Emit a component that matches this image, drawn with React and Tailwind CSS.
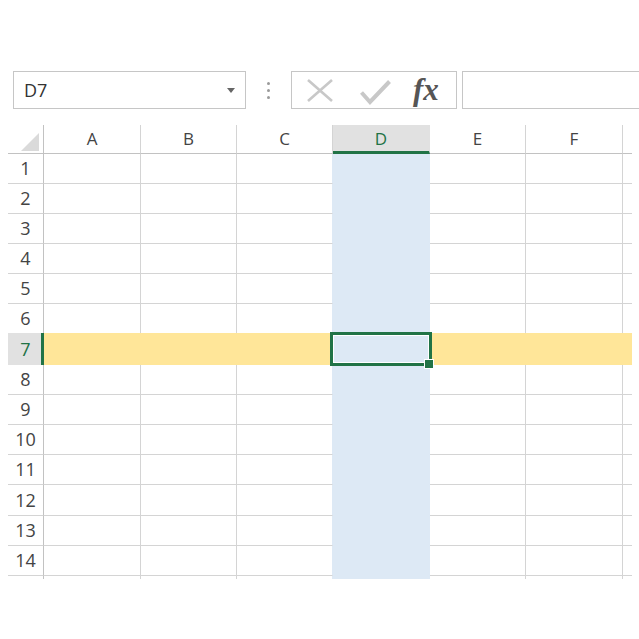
import React from "react";

const cols = [
  { l: "A", w: "w-[97px]" },
  { l: "B", w: "w-[96px]" },
  { l: "C", w: "w-[96px]" },
  { l: "D", w: "w-[97px]" },
  { l: "E", w: "w-[96px]" },
  { l: "F", w: "w-[97px]" },
];

const rowHeights = {
  1: "h-[30px]", 2: "h-[30px]", 3: "h-[30px]", 4: "h-[30px]", 5: "h-[30px]", 6: "h-[30px]",
  7: "h-[32px]", 8: "h-[30px]", 9: "h-[30px]", 10: "h-[30px]", 11: "h-[30px]", 12: "h-[31px]",
  13: "h-[30px]", 14: "h-[30px]",
};

function HeaderRow() {
  return (
    <div className="flex h-[29px]">
      <div className="w-[36px] shrink-0 border-r border-b border-[#c2c2c2] flex items-end justify-end pr-[4px] pb-[2px]">
        <svg width="18" height="18" viewBox="0 0 18 18">
          <polygon points="18,0 18,18 0,18" fill="#dadada" />
        </svg>
      </div>
      {cols.map((c) =>
        c.l === "D" ? (
          <div
            key={c.l}
            className={`${c.w} shrink-0 bg-[#e1e1e1] border-r border-r-[#e1e1e1] border-b-[3px] border-b-[#217346] flex items-center justify-center text-[#217346] text-[17px] pt-[2px]`}
          >
            {c.l}
          </div>
        ) : (
          <div
            key={c.l}
            className={`${c.w} shrink-0 border-r border-r-[#d4d4d4] border-b border-b-[#c2c2c2] flex items-center justify-center text-[#444] text-[17px]`}
          >
            {c.l}
          </div>
        )
      )}
      <div className="w-[9px] shrink-0 border-b border-[#c2c2c2]" />
    </div>
  );
}

function BodyRow({ n }) {
  const h = rowHeights[n];
  if (n === 7) {
    return (
      <div className={`flex ${h} mt-[-1px]`}>
        <div className="w-[36px] shrink-0 bg-[#e1e1e1] border-r-[3px] border-[#217346] flex items-center justify-center text-[#217346] text-[18px] pl-[2px]">
          7
        </div>
        {cols.map((c) => (
          <div
            key={c.l}
            className={`${c.w} shrink-0 ${c.l === "D" ? "bg-[#dde9f5]" : "bg-[#ffe699]"}`}
          />
        ))}
        <div className="w-[9px] shrink-0 bg-[#ffe699]" />
      </div>
    );
  }
  return (
    <div className={`flex ${h}`}>
      <div className="w-[36px] shrink-0 border-r border-r-[#c2c2c2] border-b border-b-[#d4d4d4] flex items-center justify-center text-[#444] text-[18px]">
        {n}
      </div>
      {cols.map((c) => {
        if (c.l === "D")
          return <div key={c.l} className={`${c.w} shrink-0 bg-[#dde9f5]`} />;
        if (c.l === "C")
          return (
            <div
              key={c.l}
              className={`${c.w} shrink-0 border-r border-r-[#dde9f5] border-b border-b-[#d4d4d4]`}
            />
          );
        return (
          <div key={c.l} className={`${c.w} shrink-0 border-r border-b border-[#d4d4d4]`} />
        );
      })}
      <div className="w-[9px] shrink-0 border-b border-[#d4d4d4]" />
    </div>
  );
}

function TrailerRow() {
  return (
    <div className="flex h-[3px]">
      <div className="w-[36px] shrink-0 border-r border-[#c2c2c2]" />
      {cols.map((c) => {
        if (c.l === "D") return <div key={c.l} className={`${c.w} shrink-0 bg-[#dde9f5]`} />;
        if (c.l === "C")
          return <div key={c.l} className={`${c.w} shrink-0 border-r border-[#dde9f5]`} />;
        return <div key={c.l} className={`${c.w} shrink-0 border-r border-[#d4d4d4]`} />;
      })}
    </div>
  );
}

export default function App() {
  const rows = Array.from({ length: 14 }, (_, i) => i + 1);
  return (
    <div
      className="w-[639px] h-[639px] bg-white overflow-hidden"
      style={{ fontFamily: '"Open Sans", "Noto Sans", sans-serif' }}
    >
      {/* toolbar */}
      <div className="flex items-start pt-[71px] pl-[13px]">
        <div className="w-[233px] h-[38px] shrink-0 border border-[#c6c6c6] flex items-center justify-between pl-[10px] pr-[10px]">
          <span className="text-[18px] text-[#333] leading-none">D7</span>
          <span className="w-0 h-0 border-l-[4px] border-r-[4px] border-t-[5px] border-l-transparent border-r-transparent border-t-[#666]" />
        </div>
        <div className="ml-[21px] h-[38px] flex flex-col items-center justify-center gap-[4px]">
          <span className="w-[3px] h-[3px] rounded-full bg-[#9a9a9a]" />
          <span className="w-[3px] h-[3px] rounded-full bg-[#9a9a9a]" />
          <span className="w-[3px] h-[3px] rounded-full bg-[#9a9a9a]" />
        </div>
        <div className="ml-[21px] w-[166px] h-[38px] shrink-0 border border-[#c6c6c6] flex items-center pl-[15px]">
          <svg width="26" height="23" viewBox="0 0 26 23" className="shrink-0">
            <path d="M1 1 L25 22 M25 1 L1 22" stroke="#c8c8c8" strokeWidth="2.6" fill="none" />
          </svg>
          <svg width="31" height="25" viewBox="0 0 31 25" className="ml-[27px] mt-[4px] shrink-0">
            <path d="M1.5 12.5 L10 22 L29.5 1.5" stroke="#c8c8c8" strokeWidth="4" fill="none" />
          </svg>
          <span
            className="ml-[22px] italic font-semibold text-[31px] leading-none text-[#555] mt-[-2px]"
            style={{ fontFamily: '"Liberation Serif", "DejaVu Serif", serif' }}
          >
            fx
          </span>
        </div>
        <div className="ml-[5px] w-[200px] h-[38px] shrink-0 border border-[#c6c6c6]" />
      </div>

      {/* grid */}
      <div className="relative mt-[16px] ml-[8px]">
        <HeaderRow />
        {rows.map((n) => (
          <BodyRow key={n} n={n} />
        ))}
        <TrailerRow />
        {/* selection */}
        <div className="absolute left-[322px] top-[207px] w-[102px] h-[34px] border-[3px] border-[#217346] shadow-[inset_0_0_0_1px_#ffffff]" />
        <div className="absolute left-[417px] top-[235px] w-[8px] h-[8px] bg-[#217346] outline outline-1 outline-white" />
      </div>
    </div>
  );
}
